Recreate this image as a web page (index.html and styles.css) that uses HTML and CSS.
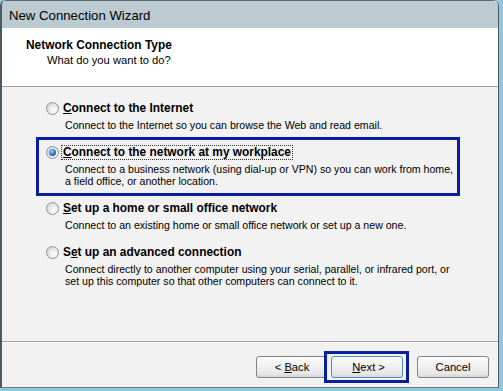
FILE: index.html
```html
<!DOCTYPE html>
<html lang="en">
<head>
    <meta charset="UTF-8">
    <title>New Connection Wizard</title>
    <link rel="stylesheet" href="styles.css">
</head>
<body>
    <div class="window">
        <div class="titlebar">New Connection Wizard</div>

        <div class="header">
            <h1>Network Connection Type</h1>
            <p>What do you want to do?</p>
        </div>

        <div class="content">
            <div class="option">
                <div class="option-label"><span class="radio"></span><span class="text"><u>C</u>onnect to the Internet</span></div>
                <p class="desc">Connect to the Internet so you can browse the Web and read email.</p>
            </div>
            <div class="option marked">
                <div class="option-label"><span class="radio checked"></span><span class="text focus"><u>C</u>onnect to the network at my workplace</span></div>
                <p class="desc">Connect to a business network (using dial-up or VPN) so you can work from home,<br>a field office, or another location.</p>
            </div>
            <div class="option">
                <div class="option-label"><span class="radio"></span><span class="text"><u>S</u>et up a home or small office network</span></div>
                <p class="desc">Connect to an existing home or small office network or set up a new one.</p>
            </div>
            <div class="option">
                <div class="option-label"><span class="radio"></span><span class="text">S<u>e</u>t up an advanced connection</span></div>
                <p class="desc">Connect directly to another computer using your serial, parallel, or infrared port, or<br>set up this computer so that other computers can connect to it.</p>
            </div>
        </div>

        <div class="footer">
            <button class="btn">&lt; <u>B</u>ack</button>
            <span class="btn-mark"><button class="btn">&nbsp;<u>N</u>ext &gt;</button></span>
            <button class="btn cancel">Cancel</button>
        </div>
    </div>
</body>
</html>
```

FILE: styles.css
```css
html, body { margin: 0; padding: 0; }
body {
    font-family: "Liberation Sans", Arial, sans-serif;
    font-size: 11.2px;
    color: #000;
    background: #8fc6e0;
    width: 503px; height: 391px;
}
.window {
    width: 499px; height: 388px; box-sizing: border-box;
    border-left: 2px solid #4d5a60;
    border-right: 1px solid #4d5a60;
    border-bottom: 1px solid #6b7a80;
    border-radius: 6px 6px 0 0;
    display: flex; flex-direction: column;
    background: #f2f2f2;
    overflow: hidden;
}
.titlebar {
    height: 28px; box-sizing: border-box;
    padding: 7px 0 0 7px;
    background: #bccad1;
    border-top: 1px solid #5b6a70;
    font-size: 13.2px;
    color: #000;
}
.header {
    height: 59px; box-sizing: border-box;
    background: #fff;
    border-bottom: 1px solid #a0a0a0;
    padding: 10px 0 0 24px;
}
.header h1 { margin: 0; font-size: 11.9px; font-weight: bold; line-height: 14px; }
.header p { margin: 1px 0 0 21px; line-height: 14px; }

.content {
    flex: 1;
    padding: 14px 0 0 44px;
    border-bottom: 1px solid #a0a0a0;
}
.option { margin-bottom: 14px; }
.option-label { display: flex; align-items: center; height: 15px; font-weight: bold; font-size: 11.9px; }
.text { margin-left: 3px; padding: 0 1px; line-height: 13px; }
.text.focus { outline: 1px dotted #333; }
.desc { margin: 3px 0 0 19px; line-height: 12px; font-size: 10.6px; white-space: nowrap; }
.option.marked {
    width: 424px; box-sizing: border-box;
    border: 3px solid #0a1fa0;
    padding: 5px 0 6px 7px;
    margin: -8px 0 5px -10px;
}

.radio {
    width: 11px; height: 11px; border-radius: 50%;
    border: 1px solid #87949b;
    background: radial-gradient(circle at 65% 65%, #ffffff 5%, #d0d0d0 90%);
    position: relative;
}
.radio.checked::after {
    content: ""; position: absolute; left: 2px; top: 2px;
    width: 7px; height: 7px; border-radius: 50%;
    background: radial-gradient(circle at 40% 35%, #9cc8f2, #1b56b0 70%, #10347a);
}

.footer {
    height: 45px; box-sizing: border-box;
    border-top: 1px solid #fff;
    display: flex; justify-content: flex-end; align-items: flex-start;
    padding: 13px 9px 0 0;
}
.btn {
    width: 72px; height: 22px;
    font-family: inherit; font-size: 11.2px;
    border: 1px solid #7f8589; border-radius: 3px;
    background: linear-gradient(#fbfbfb, #e6e6e6 85%, #d4d4d4);
    padding: 0; color: #000;
}
.btn-mark {
    display: flex;
    border: 3px solid #0a1fa0;
    padding: 2px 3px 2px 4px;
    margin: -5px 0 0 -4px;
    background: #f2f2f2;
}
.btn-mark .btn { border-color: #4f8fc0; }
.btn.cancel { margin-left: 8px; }
```
